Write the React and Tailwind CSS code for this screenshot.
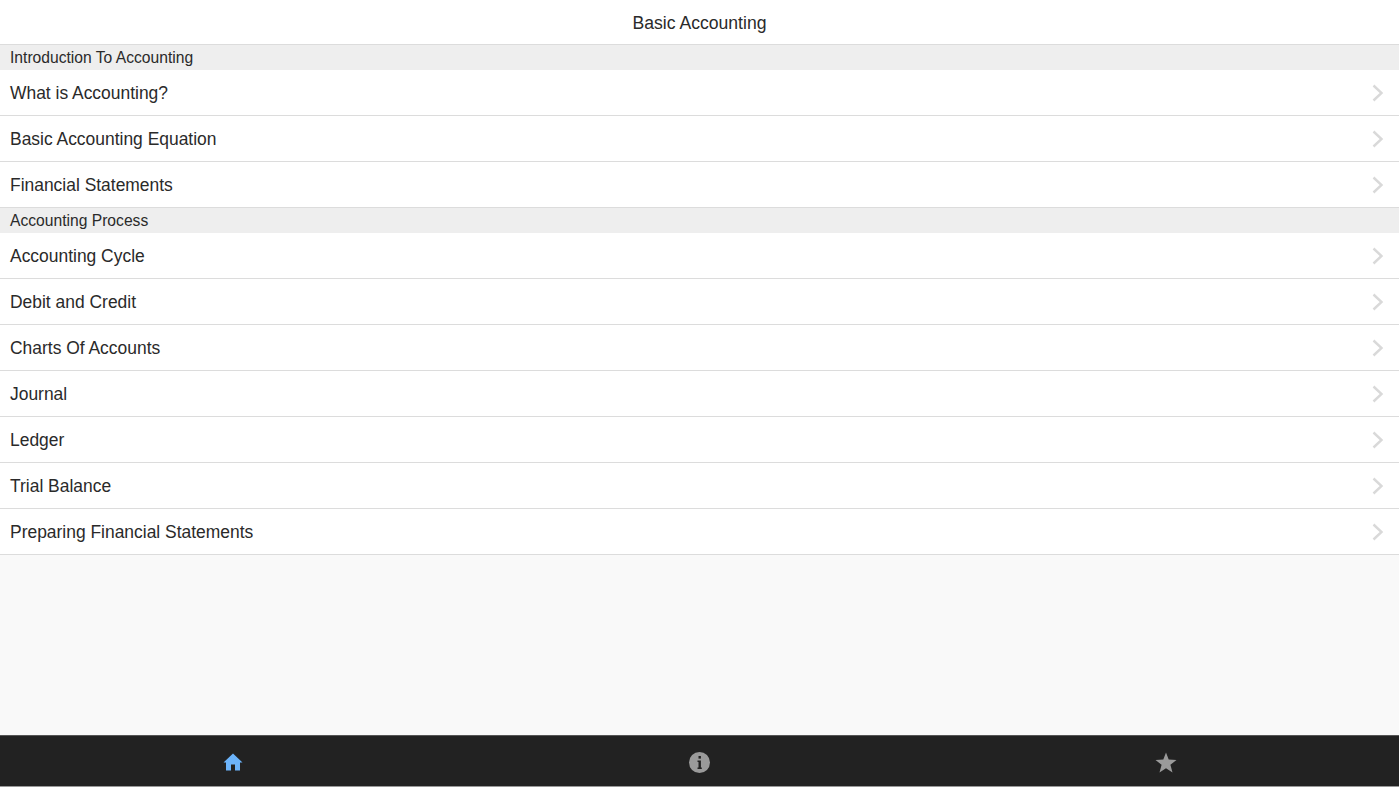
const sections = [
  {
    title: "Introduction To Accounting",
    rows: ["What is Accounting?", "Basic Accounting Equation", "Financial Statements"],
  },
  {
    title: "Accounting Process",
    rows: [
      "Accounting Cycle",
      "Debit and Credit",
      "Charts Of Accounts",
      "Journal",
      "Ledger",
      "Trial Balance",
      "Preparing Financial Statements",
    ],
  },
];

function Chevron() {
  return (
    <svg width="12" height="18" viewBox="0 0 12 18" fill="none" className="mr-[15px] shrink-0">
      <path d="M1.5 1.5 L9.5 9 L1.5 16.5" stroke="#d9d9d9" strokeWidth="2.4" />
    </svg>
  );
}

function Row({ label }) {
  return (
    <div className="flex h-[46px] items-center justify-between border-b border-[#dcdcdc] bg-white pl-[10px]">
      <span className="pt-px text-[17.45px] text-[#2a2a2a]">{label}</span>
      <Chevron />
    </div>
  );
}

export default function App() {
  return (
    <div className="flex h-[787px] w-[1399px] flex-col overflow-hidden bg-[#f9f9f9] font-['Liberation_Sans',Arial,sans-serif]">
      <header className="flex h-[45px] items-center justify-center border-b border-[#dcdcdc] bg-white pt-[2px] text-[17.6px] text-[#2a2a2a]">
        Basic Accounting
      </header>

      <div className="flex-1">
        {sections.map((section) => (
          <section key={section.title}>
            <div className="flex h-[25px] items-center bg-[#eeeeee] pl-[10px] text-[15.65px] text-[#2a2a2a]">
              {section.title}
            </div>
            {section.rows.map((row) => (
              <Row key={row} label={row} />
            ))}
          </section>
        ))}
      </div>

      <nav className="grid h-[52px] grid-cols-3 border-y border-t-[#555] border-b-[#999] bg-[#222222] pt-[2px]">
        <div className="flex items-center justify-center">
          <svg width="20" height="18" viewBox="0 0 20 18" fill="#6cb4fb">
            <path d="M10 0.5 L19.5 9.5 L17 9.5 L17 17.5 L12 17.5 L12 11.5 L8 11.5 L8 17.5 L3 17.5 L3 9.5 L0.5 9.5 Z" />
          </svg>
        </div>
        <div className="flex items-center justify-center">
          <svg width="21" height="21" viewBox="0 0 21 21">
            <circle cx="10.5" cy="10.5" r="10.5" fill="#9a9a9a" />
            <rect x="9.5" y="4" width="2.4" height="2.6" fill="#222" />
            <path d="M8.5 8.5 H11.9 V15.6 H12.8 V17 H8.5 V15.6 H9.5 V9.9 H8.5 Z" fill="#222" />
          </svg>
        </div>
        <div className="flex items-center justify-center">
          <svg width="22" height="21" viewBox="0 0 22 21" fill="#9a9a9a">
            <path d="M11 0.5 L13.7 7.6 L21.5 8 L15.4 12.8 L17.5 20.5 L11 16.2 L4.5 20.5 L6.6 12.8 L0.5 8 L8.3 7.6 Z" />
          </svg>
        </div>
      </nav>
    </div>
  );
}
